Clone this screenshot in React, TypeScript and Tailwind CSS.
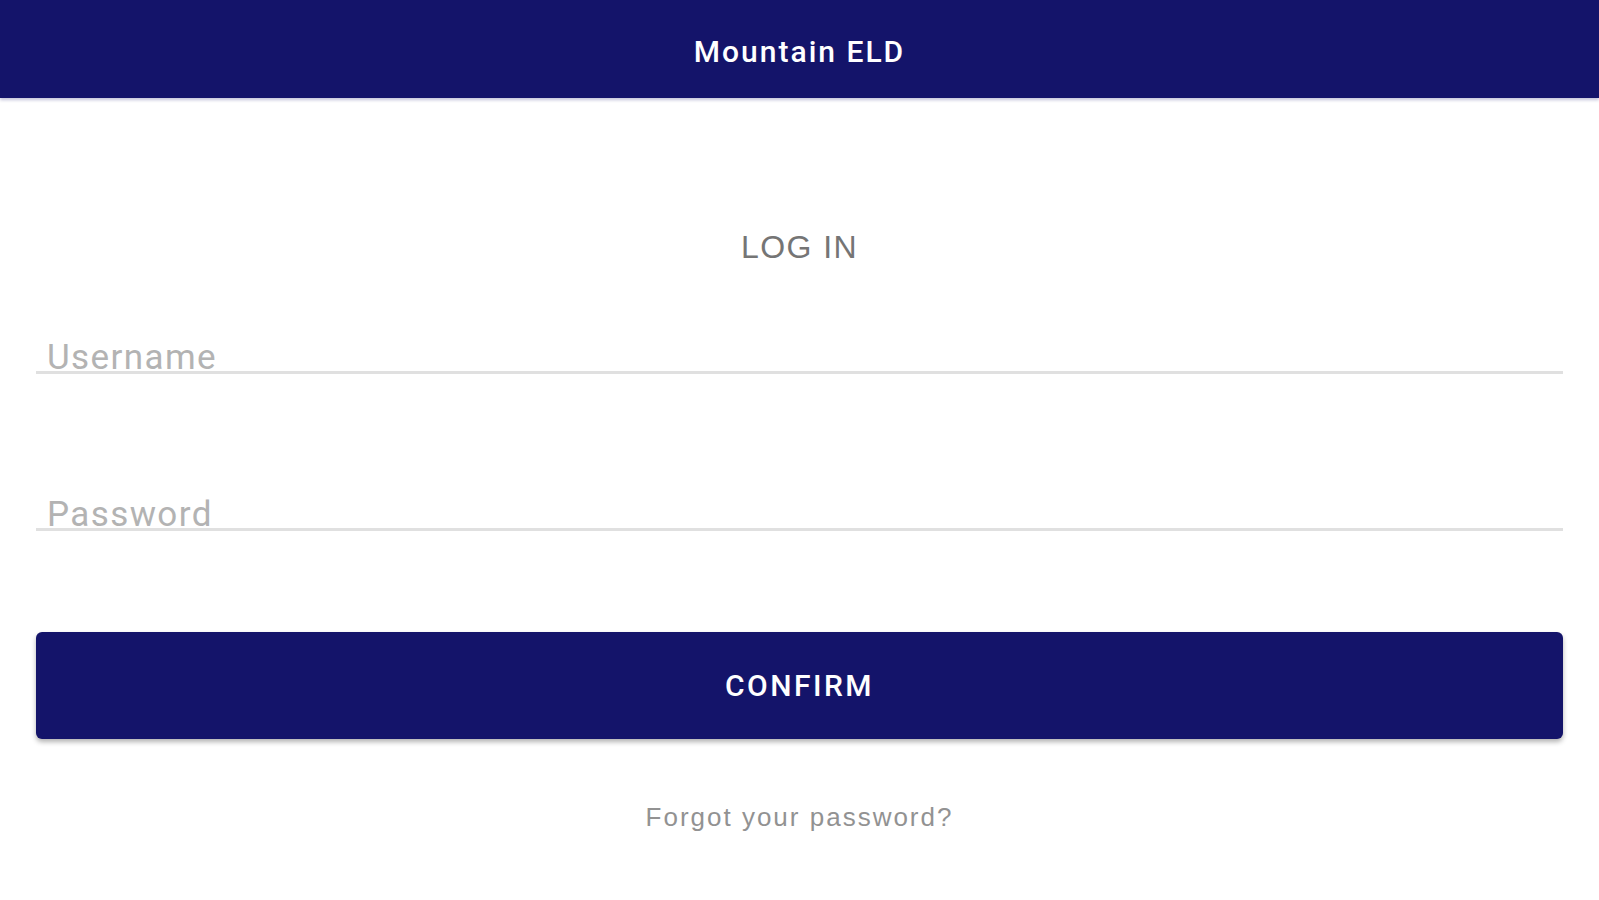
export default function App(){
  return (
    <div className="min-h-screen bg-white" style={{fontFamily: 'Roboto, "Noto Sans", sans-serif'}}>
      <header className="flex h-[98px] items-center justify-center bg-[#14146a] pt-[4px] shadow-[0_2px_3px_rgba(20,20,106,0.25)]">
        <h1 className="text-[30px] font-medium tracking-[2px] text-white">Mountain ELD</h1>
      </header>

      <main className="px-[36px]">
        <h2 className="mt-[129px] text-center font-['Liberation_Sans',Arial,sans-serif] text-[32px] leading-[40px] tracking-[1.4px] text-[#757575]">LOG IN</h2>

        <div className="mt-[78px] border-b-[3px] border-[#e0e0e0] pl-[11px] text-[35px] leading-[26px] tracking-[1.4px] text-[#b3b3b3]">
          Username
        </div>

        <div className="mt-[128px] border-b-[3px] border-[#e0e0e0] pl-[11px] text-[35px] leading-[26px] tracking-[1.4px] text-[#b3b3b3]">
          Password
        </div>

        <button className="mt-[101px] flex h-[107px] w-full items-center justify-center rounded-md bg-[#14146a] text-[30px] font-medium tracking-[2.5px] text-white shadow-[0_3px_5px_rgba(0,0,0,0.3)]">
          CONFIRM
        </button>

        <p className="mt-[62px] text-center font-['Liberation_Sans',Arial,sans-serif] text-[26px] leading-[32px] tracking-[2px] text-[#929292]">Forgot your password?</p>
      </main>
    </div>
  )
}
